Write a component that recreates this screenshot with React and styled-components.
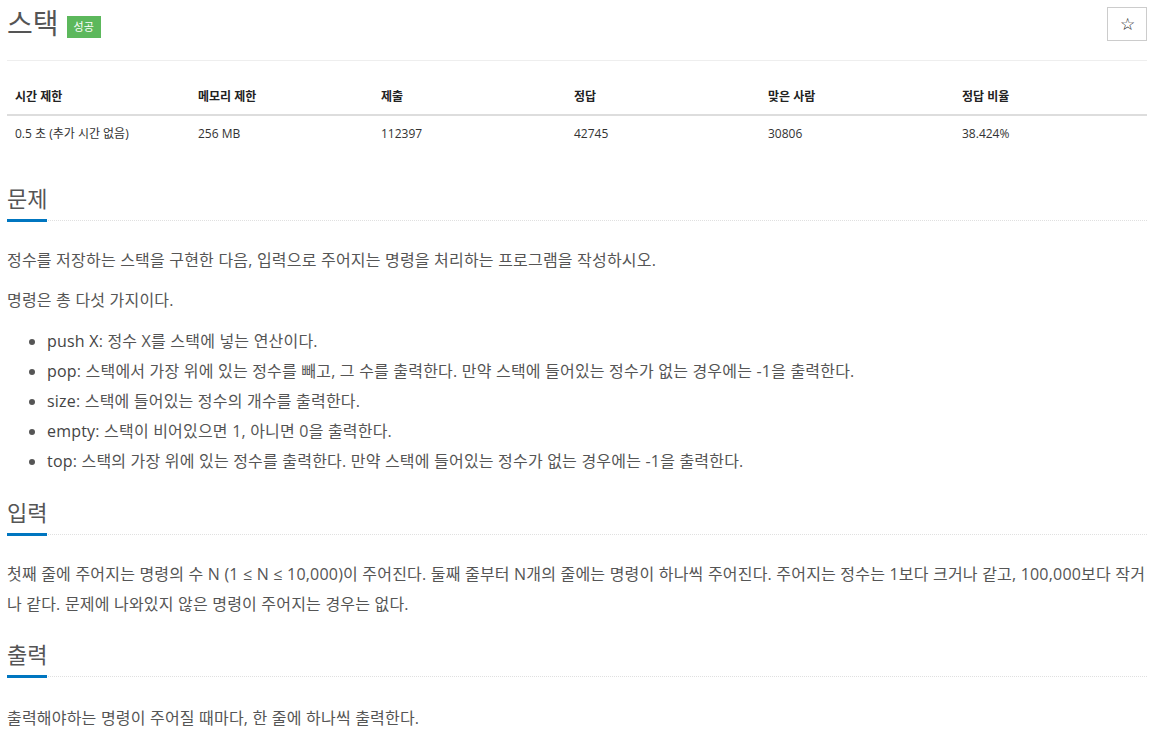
import React from 'react';
import styled, { createGlobalStyle } from 'styled-components';

const GlobalStyle = createGlobalStyle`
  body {
    margin: 0;
    background: #fff;
    font-family: 'Open Sans', 'Noto Sans CJK KR', sans-serif;
    color: #555;
  }
`;

const Page = styled.div`
  width: 1140px;
  padding: 0 6px 0 7px;
`;

const Header = styled.div`
  display: flex;
  align-items: center;
  justify-content: space-between;
  padding-top: 5px;
  padding-bottom: 19px;
  border-bottom: 1px solid #eee;
`;

const TitleGroup = styled.div`
  display: flex;
  align-items: center;
  gap: 8px;
`;

const Title = styled.h1`
  margin: 0;
  font-size: 28px;
  font-weight: 400;
  line-height: 36px;
  color: #555;
`;

const Badge = styled.span`
  background: #5cb85c;
  color: #fff;
  font-size: 11px;
  line-height: 22px;
  padding: 0 7px;
  margin-top: 8px;
`;

const StarButton = styled.button`
  width: 40px;
  height: 34px;
  border: 1px solid #ccc;
  background: #fff;
  color: #222;
  font-size: 17px;
  padding: 0;
  cursor: pointer;
  margin-top: 2px;
`;

const Table = styled.div`
  display: grid;
  grid-template-columns: 183px 183px 193px 194px 194px 193px;
  margin-top: 18px;
  font-size: 12px;
  color: #333;
`;

const HeadCell = styled.div`
  padding: 8px 8px;
  line-height: 19px;
  font-weight: 700;
  color: #222;
  border-bottom: 2px solid #ddd;
`;

const Cell = styled.div`
  padding: 8px 8px;
  line-height: 19px;
`;

const Section = styled.section`
  margin-top: ${p => p.$top}px;
`;

const SectionTitle = styled.div`
  border-bottom: 1px dotted #e0e0e0;
`;

const SectionName = styled.h2`
  display: inline-block;
  margin: 0;
  font-size: 22px;
  font-weight: 400;
  line-height: 34px;
  color: #555;
  border-bottom: 3px solid #0076c0;
  margin-bottom: -2px;
  padding-bottom: 4px;
`;

const Text = styled.p`
  margin: ${p => p.$gap || 24}px 0 0;
  font-size: 16px;
  line-height: 30px;
  letter-spacing: 0.2px;
  word-break: break-all;
  & + & {
    margin-top: 10px;
  }
`;

const List = styled.ul`
  margin: 11px 0 0;
  padding-left: 40px;
  font-size: 16px;
  line-height: 30px;
  letter-spacing: 0.2px;
`;

const Item = styled.li``;

const Cmd = styled.span`
  color: #444;
`;

const stats = [
  ['시간 제한', '0.5 초 (추가 시간 없음)'],
  ['메모리 제한', '256 MB'],
  ['제출', '112397'],
  ['정답', '42745'],
  ['맞은 사람', '30806'],
  ['정답 비율', '38.424%'],
];

const commands = [
  ['push X', ': 정수 X를 스택에 넣는 연산이다.'],
  ['pop', ': 스택에서 가장 위에 있는 정수를 빼고, 그 수를 출력한다. 만약 스택에 들어있는 정수가 없는 경우에는 -1을 출력한다.'],
  ['size', ': 스택에 들어있는 정수의 개수를 출력한다.'],
  ['empty', ': 스택이 비어있으면 1, 아니면 0을 출력한다.'],
  ['top', ': 스택의 가장 위에 있는 정수를 출력한다. 만약 스택에 들어있는 정수가 없는 경우에는 -1을 출력한다.'],
];

export default function App() {
  return (
    <Page>
      <GlobalStyle />
      <Header>
        <TitleGroup>
          <Title>스택</Title>
          <Badge>성공</Badge>
        </TitleGroup>
        <StarButton>☆</StarButton>
      </Header>

      <Table>
        {stats.map(([h]) => <HeadCell key={h}>{h}</HeadCell>)}
        {stats.map(([h, v]) => <Cell key={h}>{v}</Cell>)}
      </Table>

      <Section $top={30}>
        <SectionTitle><SectionName>문제</SectionName></SectionTitle>
        <Text>정수를 저장하는 스택을 구현한 다음, 입력으로 주어지는 명령을 처리하는 프로그램을 작성하시오.</Text>
        <Text>명령은 총 다섯 가지이다.</Text>
        <List>
          {commands.map(([c, d]) => (
            <Item key={c}><Cmd>{c}</Cmd>{d}</Item>
          ))}
        </List>
      </Section>

      <Section $top={19}>
        <SectionTitle><SectionName>입력</SectionName></SectionTitle>
        <Text>첫째 줄에 주어지는 명령의 수 N (1 ≤ N ≤ 10,000)이 주어진다. 둘째 줄부터 N개의 줄에는 명령이 하나씩 주어진다. 주어지는 정수는 1보다 크거나 같고, 100,000보다 작거나 같다. 문제에 나와있지 않은 명령이 주어지는 경우는 없다.</Text>
      </Section>

      <Section $top={18}>
        <SectionTitle><SectionName>출력</SectionName></SectionTitle>
        <Text $gap={26}>출력해야하는 명령이 주어질 때마다, 한 줄에 하나씩 출력한다.</Text>
      </Section>
    </Page>
  );
}
